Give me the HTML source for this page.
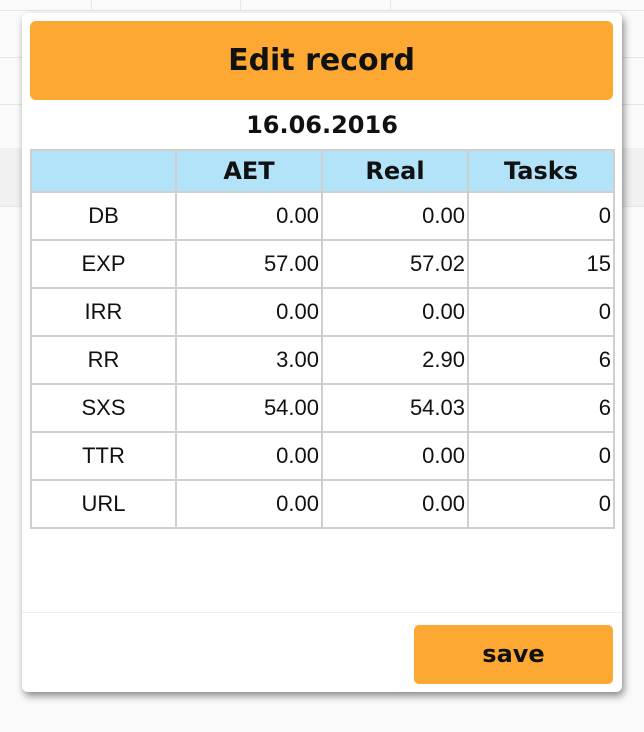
<!DOCTYPE html>
<html><head><style>
body{margin:0;width:644px;height:732px;background:#fafafa;position:relative;overflow:hidden;font-family:"DejaVu Sans","Liberation Sans",sans-serif}
.bgl{position:absolute;background:#e6e6e6}
.dlg{position:absolute;left:22px;top:13px;width:600px;height:679px;background:#fff;border-radius:6px;box-shadow:2px 4px 8px rgba(0,0,0,.45)}
.hdr{position:absolute;left:8px;top:8px;width:583px;height:79px;background:#fda832;border-radius:6px;font-weight:bold;font-size:30px;color:#111;text-align:center;line-height:79px}
.date{position:absolute;left:0;width:600px;top:98px;text-align:center;font-weight:bold;font-size:24px;color:#111}
table{position:absolute;left:8px;top:136px;border-collapse:collapse;table-layout:fixed;width:583px;font-family:"Liberation Sans",sans-serif;font-size:22px;color:#111}
td,th{border:2px solid #cfcfcf;padding:0 2px;height:48px;box-sizing:border-box}
th{background:#b3e3f9;height:42px;font-family:"DejaVu Sans",sans-serif;font-size:24px}
td{text-align:right}
td:first-child{text-align:center}
.sep{position:absolute;left:0;top:599px;width:600px;height:1px;background:#eee}
.save{position:absolute;left:392px;top:612px;width:199px;height:59px;background:#fda832;border-radius:5px;font-weight:bold;font-size:24px;text-align:center;line-height:59px;color:#111}
</style></head><body>
<div class="bgl" style="left:0;top:148px;width:644px;height:58px;background:#f0f0f0"></div>
<div class="bgl" style="left:0;top:10px;width:644px;height:1px"></div>
<div class="bgl" style="left:0;top:57px;width:644px;height:1px"></div>
<div class="bgl" style="left:0;top:104px;width:644px;height:1px"></div>
<div class="bgl" style="left:0;top:206px;width:644px;height:1px"></div>
<div class="bgl" style="left:91px;top:0;width:1px;height:10px"></div>
<div class="bgl" style="left:240px;top:0;width:1px;height:10px"></div>
<div class="bgl" style="left:390px;top:0;width:1px;height:10px"></div>
<div class="dlg">
<div class="hdr">Edit record</div>
<div class="date">16.06.2016</div>
<table>
<colgroup><col style="width:145px"><col style="width:146px"><col style="width:146px"><col style="width:146px"></colgroup>
<tr><th></th><th>AET</th><th>Real</th><th>Tasks</th></tr>
<tr><td>DB</td><td>0.00</td><td>0.00</td><td>0</td></tr>
<tr><td>EXP</td><td>57.00</td><td>57.02</td><td>15</td></tr>
<tr><td>IRR</td><td>0.00</td><td>0.00</td><td>0</td></tr>
<tr><td>RR</td><td>3.00</td><td>2.90</td><td>6</td></tr>
<tr><td>SXS</td><td>54.00</td><td>54.03</td><td>6</td></tr>
<tr><td>TTR</td><td>0.00</td><td>0.00</td><td>0</td></tr>
<tr><td>URL</td><td>0.00</td><td>0.00</td><td>0</td></tr>
</table>
<div class="sep"></div>
<div class="save">save</div>
</div>
</body></html>
